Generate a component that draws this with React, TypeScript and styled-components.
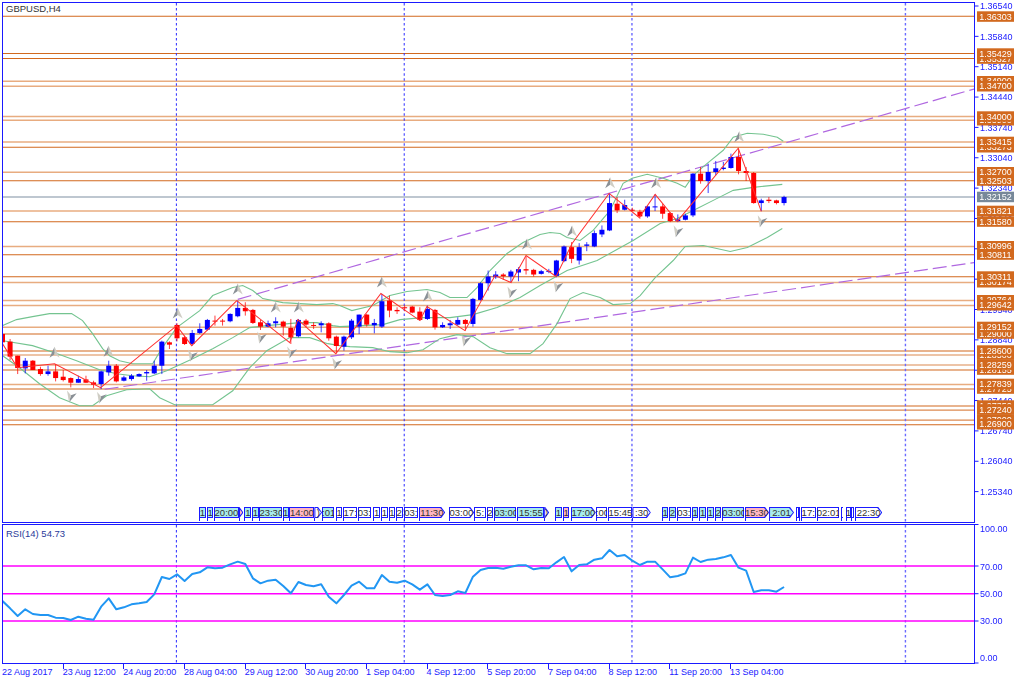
import styled, {createGlobalStyle} from "styled-components";

const BLUE = "#1a1aff";

const GlobalStyle = createGlobalStyle`
    html, body {
        margin: 0;
        background: #fff;
    }
`;

const Page = styled.div`
    width: 1024px;
    height: 683px;
    padding: 2px 0 0 2px;
    box-sizing: border-box;
    overflow: hidden;
    background: #fff;
    font-family: "Liberation Sans", Arial, sans-serif;
    font-size: 9px;
    color: ${BLUE};
`;

const Row = styled.div<{ $h: number; $gap?: number }>`
    display: flex;
    height: ${p => p.$h}px;
    margin-bottom: ${p => p.$gap || 0}px;
`;

const Pane = styled.div`
    position: relative;
    flex: none;
    width: 973px;
    box-sizing: border-box;
    border: 1px solid ${BLUE};
    border-left-width: 1.5px;
`;

const Plot = styled.svg`
    display: block;
    width: 100%;
    height: 100%;
    filter: blur(0.35px);
`;

const PaneTitle = styled.div<{ $dark?: boolean }>`
    position: absolute;
    left: 3px;
    top: ${p => p.$dark ? 0 : 3}px;
    color: ${p => p.$dark ? "#333" : "#2a3a9a"};
    font-size: 9.5px;
    line-height: 11px;
`;

const AxisPlot = styled.svg`
    display: block;
    flex: 1;
    min-width: 0;
    height: 100%;
    font-family: "Liberation Sans", Arial, sans-serif;
    font-size: 9px;
    filter: blur(0.15px);
`;

const TradeTags = styled.div`
    position: absolute;
    left: 0;
    top: 504px;
    display: flex;
    height: 11px;
`;

const Trade = styled.div<{ $w: number; $skip: number }>`
    position: relative;
    flex: none;
    width: ${p => p.$w}px;
    margin-left: ${p => p.$skip}px;

    &::after {
        content: "";
        position: absolute;
        left: 0;
        top: 100%;
        width: 1px;
        height: 3px;
        background: ${BLUE};
    }
`;

const pentagon = "polygon(0 0, calc(100% - 4px) 0, 100% 50%, calc(100% - 4px) 100%, 0 100%)";

const TradeFace = styled.div<{ $fill: string; $point?: boolean }>`
    position: relative;
    height: 100%;
    overflow: hidden;
    isolation: isolate;
    background: ${BLUE};
    clip-path: ${p => p.$point ? pentagon : "none"};
    color: #333;
    font-size: 9.5px;
    line-height: 11px;
    text-align: center;
    white-space: nowrap;

    &::before {
        content: "";
        position: absolute;
        inset: 1px;
        z-index: -1;
        background: ${p => p.$fill};
        clip-path: ${p => p.$point ? pentagon : "none"};
    }
`;

const TimeAxis = styled.div`
    display: flex;
`;

const TimeCell = styled.div`
    position: relative;
    flex: none;
    width: 60.67px;
    padding-top: 3px;
    line-height: 11px;
    white-space: nowrap;

    &:not(:first-child)::before {
        content: "";
        position: absolute;
        left: 0;
        top: 0;
        width: 1px;
        height: 5px;
        background: ${BLUE};
    }
`;

type Candle = [string, number, number, number, number];

// traced from crops, values are 1/3 px from the crop's top edge
const crop1: Candle[] = [
    ["r", 160, 185, 150, 195], ["r", 183, 228, 175, 238], ["r", 225, 262, 225, 280], ["b", 240, 263, 232, 278],
    ["r", 240, 268, 238, 268], ["r", 265, 280, 258, 285], ["b", 272, 280, 255, 285], ["r", 272, 292, 250, 302],
    ["r", 288, 298, 268, 302], ["r", 292, 306, 290, 320], ["b", 295, 306, 285, 306], ["r", 296, 306, 285, 306],
    ["r", 305, 312, 300, 322], ["b", 272, 310, 270, 325], ["b", 255, 275, 240, 285], ["r", 255, 302, 250, 305],
    ["b", 290, 300, 285, 302], ["b", 285, 295, 280, 300], ["b", 280, 287, 278, 288], ["b", 274, 278, 268, 300],
    ["b", 255, 278, 240, 280], ["b", 183, 255, 180, 280], ["r", 185, 192, 182, 205], ["r", 133, 173, 128, 182],
    ["r", 170, 190, 165, 193], ["b", 157, 190, 148, 195], ["b", 145, 157, 128, 160], ["b", 118, 147, 115, 150],
    ["r", 120, 122, 105, 135], ["r", 120, 123, 115, 135], ["b", 100, 122, 98, 125], ["b", 82, 107, 60, 110],
    ["r", 82, 92, 65, 105], ["r", 88, 127, 85, 130], ["r", 125, 138, 118, 148], ["b", 128, 138, 120, 140],
    ["b", 122, 128, 110, 140], ["r", 123, 138, 120, 165], ["r", 142, 170, 115, 190], ["b", 118, 167, 115, 170],
    ["r", 120, 132, 115, 140], ["r", 133, 136, 125, 145], ["b", 128, 134, 122, 155], ["r", 128, 173, 125, 180],
    ["r", 168, 196, 165, 218],
];

const crop2: Candle[] = [
    ["b", 288, 318, 285, 330], ["b", 240, 290, 235, 295], ["b", 222, 258, 222, 280], ["r", 222, 252, 220, 258],
    ["b", 247, 254, 235, 278], ["b", 182, 258, 160, 262], ["r", 180, 210, 165, 230], ["r", 208, 212, 200, 220],
    ["r", 200, 203, 195, 212], ["r", 198, 216, 196, 218], ["r", 213, 238, 200, 240], ["b", 205, 235, 195, 238],
    ["r", 208, 260, 205, 267], ["b", 253, 260, 245, 262], ["b", 248, 254, 238, 265], ["b", 238, 252, 230, 255],
    ["r", 238, 250, 235, 270], ["b", 175, 250, 172, 258], ["b", 128, 178, 125, 180], ["b", 108, 128, 90, 150],
    ["b", 102, 110, 92, 115], ["r", 102, 107, 98, 118], ["b", 93, 108, 88, 125], ["b", 86, 96, 80, 122],
    ["r", 86, 90, 48, 102], ["r", 88, 102, 85, 108], ["b", 92, 100, 88, 102], ["b", 91, 94, 85, 98],
    ["b", 60, 106, 58, 110], ["b", 18, 62, 15, 65], ["r", 20, 55, 5, 68], ["b", 20, 60, 8, 72],
];

const crop3: Candle[] = [
    ["b", 372, 376, 365, 392], ["b", 338, 378, 330, 380], ["b", 328, 342, 315, 350], ["b", 248, 330, 220, 332],
    ["r", 250, 270, 230, 278], ["b", 254, 268, 238, 270], ["r", 268, 271, 262, 273], ["r", 274, 288, 268, 295],
    ["b", 258, 288, 255, 292], ["b", 258, 260, 222, 272], ["r", 258, 280, 250, 295], ["r", 278, 302, 275, 305],
    ["b", 297, 302, 282, 305], ["b", 285, 298, 280, 300], ["b", 160, 285, 158, 290], ["r", 160, 182, 140, 190],
    ["b", 155, 182, 130, 218], ["b", 144, 155, 122, 165], ["b", 142, 146, 125, 150], ["b", 110, 143, 100, 145],
    ["r", 110, 152, 85, 162], ["r", 152, 158, 140, 182], ["r", 158, 248, 155, 250], ["b", 240, 248, 235, 272],
    ["r", 238, 242, 230, 248], ["r", 240, 248, 238, 252], ["b", 230, 248, 226, 255],
];

const shift = (rows: Candle[], top: number): Candle[] =>
    rows.map(([c, a, b, h, l]) => [c, top + a / 3, top + b / 3, top + h / 3, top + l / 3]);

const candles = [...shift(crop1, 280), ...shift(crop2, 240), ...shift(crop3, 120)];
const barX = (i: number) => 3 + 7.58 * i;

const levels: [number, string][] = [
    [16.3, "d"], [53.3, "d"], [58.3, "d"], [81, "l"], [86, "l"], [116.3, "l"], [120, "l"], [141.7, "l"], [147, "d"],
    [172, "l"], [180.3, "d"], [210.7, "l"], [221.3, "d"], [246, "l"], [254.3, "d"], [276.3, "d"], [282, "l"],
    [300, "l"], [305, "l"], [326.7, "l"], [333.3, "d"], [350.3, "d"], [354.3, "m"], [364.3, "m"], [369.3, "d"],
    [383.7, "l"], [388.3, "d"], [405.3, "d"], [409.3, "m"], [419.3, "m"], [424, "d"],
];

const zigzag = [
    [3, 343], [18, 367], [55, 363], [101, 387], [177, 325], [192, 345], [237, 300], [290, 342], [298, 319],
    [336, 353], [381, 293], [420, 320], [427, 306], [465, 330], [495, 275], [511, 282], [526, 255], [556, 276],
    [572, 243], [609, 193], [639, 217], [655, 194], [677, 221], [738, 148], [761, 211],
];

const bandUpper = [
    [3, 325], [17, 319], [33, 316], [50, 313], [72, 313], [83, 320], [93, 333], [103, 348], [110, 355], [120, 360],
    [133, 363], [153, 363], [162, 348], [177, 327], [200, 310], [213, 295], [233, 287], [243, 285], [253, 290],
    [263, 298], [283, 302], [317, 304], [333, 303], [340, 305], [352, 310], [373, 305], [390, 295], [407, 291],
    [427, 289], [440, 292], [450, 297], [467, 297], [477, 287], [490, 270], [507, 253], [523, 242], [540, 234],
    [550, 232], [560, 233], [567, 237], [580, 240], [593, 230], [610, 210], [623, 183], [632, 178], [647, 174],
    [663, 178], [677, 183], [685, 187], [693, 175], [707, 163], [723, 150], [733, 137], [747, 133], [763, 134],
    [777, 137], [783, 141],
];

const bandMiddle = [
    [3, 340], [33, 345], [55, 352], [77, 360], [100, 369], [117, 373], [133, 375], [150, 376], [167, 370], [193, 358],
    [213, 348], [233, 337], [250, 327], [267, 325], [300, 322], [317, 322], [333, 325], [340, 326], [383, 324],
    [400, 319], [423, 317], [450, 317], [473, 314], [497, 307], [520, 297], [540, 285], [567, 270], [597, 260],
    [633, 240], [660, 223], [677, 218], [693, 210], [717, 198], [733, 190], [753, 187], [782, 184],
];

const bandLower = [
    [3, 355], [20, 367], [40, 383], [60, 397], [80, 405], [93, 405], [107, 395], [127, 389], [150, 388], [160, 397],
    [175, 404], [213, 404], [233, 390], [250, 367], [267, 350], [290, 337], [310, 337], [328, 343], [340, 345],
    [350, 346], [373, 347], [390, 351], [407, 352], [423, 349], [440, 338], [457, 334], [473, 336], [490, 347],
    [507, 353], [530, 353], [543, 343], [557, 323], [570, 298], [583, 292], [600, 297], [613, 304], [630, 303],
    [640, 295], [655, 277], [673, 260], [685, 246], [703, 245], [730, 251], [747, 247], [767, 237], [782, 228],
];

const arrowsUp = [
    [55, 352], [109, 351], [178, 313], [238, 289], [276, 307], [299, 307], [382, 282], [428, 296], [527, 244],
    [572, 231], [610, 183], [656, 183], [739, 137],
];

const arrowsDown = [
    [71, 396], [101, 397], [192, 355], [261, 337], [291, 352], [336, 363], [465, 340], [511, 292], [557, 286],
    [677, 231], [761, 221],
];

const rsi = [
    258, 280, 303, 283, 297, 300, 300, 308, 309, 315, 305, 311, 314, 275, 250, 283, 277, 268, 265, 261, 238, 186,
    192, 178, 198, 177, 172, 157, 160, 158, 148, 140, 147, 190, 205, 197, 194, 213, 235, 201, 210, 214, 208, 245,
    265, 240, 212, 200, 220, 220, 180, 200, 203, 197, 208, 224, 208, 240, 243, 240, 229, 234, 185, 165, 159, 158,
    161, 155, 151, 151, 163, 159, 160, 142, 126, 169, 150, 148, 134, 130, 105, 124, 120, 137, 150, 140, 140, 163,
    187, 183, 175, 128, 141, 134, 132, 127, 120, 158, 167, 231, 226, 226, 230, 216,
];

const axisPrices = [
    "1.36540", "1.35840", "1.35140", "1.34440", "1.33740", "1.33040", "1.32340", "1.31640", "1.30940",
    "1.30240", "1.29540", "1.28840", "1.28140", "1.27440", "1.26740", "1.26040", "1.25340",
];

// order matters, later tags cover earlier ones
const priceTags: [string, number][] = [
    ["1.35327", 58.3], ["1.34900", 81], ["1.33900", 120], ["1.33273", 147], ["1.31580", 221.3], ["1.30174", 282],
    ["1.29764", 300], ["1.29000", 333.3], ["1.28500", 354.3], ["1.28155", 369.3], ["1.27725", 388.3],
    ["1.27350", 405.3], ["1.27000", 419.3],
    ["1.36303", 16.3], ["1.35429", 53.3], ["1.34700", 86], ["1.34000", 116.3], ["1.33415", 141.7], ["1.32700", 172],
    ["1.32503", 180.3], ["1.31821", 210.7], ["1.30996", 246], ["1.30811", 254.3], ["1.30311", 276.3],
    ["1.29642", 305], ["1.29152", 326.7], ["1.28600", 350.3], ["1.28259", 364.3], ["1.27839", 383.7],
    ["1.27240", 409.3], ["1.26900", 424],
];

const rsiScale: [string, number, number][] = [
    ["100.00", 524.5, 529],
    ["70.00", 566, 567],
    ["50.00", 593.7, 594],
    ["30.00", 621, 621],
    ["0.00", 663, 658],
];

const C = "#a8ecec";
const P = "#ffb6c1";
const W = "#ffffff";

const trades: [string, number, number, string, boolean?][] = [
    ["1", 199.3, 206.7, C], ["1", 207.3, 214, C], ["20:00", 214.7, 239.3, C], ["", 239.3, 244, P, true],
    ["1", 245, 251.7, C], ["1", 252.7, 259.3, C], ["23:30", 260, 282.7, C], ["1", 283.3, 289.3, C],
    ["14:00", 290, 315, P], [")", 315, 322.7, W, true], [":01", 322.7, 335, C], ["1", 336.7, 342.7, W],
    ["17:", 344, 357.7, W], ["03:", 358.3, 371.7, W], ["1", 374, 380.7, W], ["1", 381.7, 388.3, W],
    ["1", 389.3, 396, W], ["2", 396.7, 403.3, W], ["03:", 405, 418.3, W], ["11:30", 419.3, 446, P, true],
    ["03:00", 449.3, 475, W, true], ["5:", 475, 486.7, W], ["2", 487.3, 494, W], ["03:00", 495, 517.3, C],
    ["15:55", 518.3, 545, C], [")", 545, 550, W, true], ["1", 556, 562.7, C], ["1", 563.7, 570.3, P],
    ["17:00", 571.7, 596.7, C, true], [":00", 596.7, 608.3, W], ["15:45", 609.3, 633.3, W],
    [":30", 633.3, 651.7, W, true], ["1", 662.7, 669.3, C], ["2", 670, 676.7, C], ["03:", 677.7, 691.7, W],
    ["1", 692.7, 699.3, C], ["1", 700.3, 707, C], ["1", 708, 714.7, C], ["2", 715.7, 722.3, C],
    ["03:00", 723.3, 745, C], ["15:30", 745.7, 770, P, true], ["2:01", 770, 795, C, true], ["", 796.7, 799.5, W],
    ["", 800, 801.2, W], ["17:", 801.7, 816.7, W], ["02:01", 817.7, 840, W], ["", 841.7, 844, W],
    ["1", 846.7, 851.7, W], ["", 852.3, 855, W], ["22:30", 856, 883.3, W, true],
];

const times = [
    "22 Aug 2017", "23 Aug 12:00", "24 Aug 20:00", "28 Aug 04:00", "29 Aug 12:00", "30 Aug 20:00", "1 Sep 04:00",
    "4 Sep 12:00", "5 Sep 20:00", "7 Sep 04:00", "8 Sep 12:00", "11 Sep 20:00", "13 Sep 04:00",
];

const points = (list: number[][]) => list.map(p => p.join(",")).join(" ");

const levelStroke: Record<string, [string, number]> = {
    d: ["#d2691e", 1],
    m: ["#dc8a50", 1.2],
    l: ["#e8ac80", 1.5],
};

const Bands = () => (
    <g fill="none" stroke="#74c490" strokeWidth="1.1">
        <polyline points={points(bandUpper)}/>
        <polyline points={points(bandMiddle)}/>
        <polyline points={points(bandLower)}/>
    </g>
);

const Marker = ({x, y, down}: { x: number; y: number; down?: boolean }) => (
    <g transform={`translate(${x} ${y}) rotate(${down ? 195 : 0})`}>
        <path d="M0 -6 L-5 5 L0 1.5 Z" fill="#8a9096"/>
        <path d="M0 -6 L5 5 L0 1.5 Z" fill="#cfcdc4"/>
    </g>
);

const VerticalGrid = ({y1, y2}: { y1: number; y2: number }) => (
    <g stroke="#2a2aff" strokeWidth="1" strokeDasharray="2.5 2.5">
        <line x1="176.7" x2="176.7" y1={y1} y2={y2}/>
        <line x1="404.3" x2="404.3" y1={y1} y2={y2}/>
        <line x1="631.8" x2="631.8" y1={y1} y2={y2} stroke="#6a6aff" strokeWidth="1.4"/>
        <line x1="905" x2="905" y1={y1} y2={y2} stroke="#6a6aff" strokeWidth="1.4"/>
    </g>
);

const PriceChart = () => (
    <Plot viewBox="3.5 3 970 518" preserveAspectRatio="none">
        {levels.map(([y, tone]) => (
            <line key={y} x1="3" x2="974" y1={y} y2={y} stroke={levelStroke[tone][0]} strokeWidth={levelStroke[tone][1]}/>
        ))}
        <line x1="3" x2="974" y1="196.7" y2="196.7" stroke="#a9b4c0" strokeWidth="1.5"/>
        <VerticalGrid y1={3} y2={521}/>
        <g stroke="#b068e0" strokeWidth="1.2" strokeDasharray="14 5">
            <line x1="238" y1="298.8" x2="974" y2="88.7"/>
            <line x1="105" y1="388.5" x2="974" y2="262"/>
        </g>
        <Bands/>
        {arrowsUp.map(([x, y]) => <Marker key={x} x={x} y={y}/>)}
        {arrowsDown.map(([x, y]) => <Marker key={x} x={x} y={y} down/>)}
        {candles.map(([c, top, bottom, high, low], i) => {
            const color = c === "r" ? "#ff0000" : "#0000ff";
            const x = barX(i);
            return (
                <g key={i} fill={color}>
                    <rect x={x - 0.5} y={high} width="1" height={low - high} opacity="0.75"/>
                    <rect x={x - 2.5} y={top} width="5" height={Math.max(bottom - top, 1)}/>
                </g>
            );
        })}
        <polyline points={points(zigzag)} fill="none" stroke="#ff3030" strokeWidth="1"/>
    </Plot>
);

const RsiChart = () => (
    <Plot viewBox="3.5 525 970 138" preserveAspectRatio="none">
        <VerticalGrid y1={525} y2={663}/>
        <g stroke="#ff00ff" strokeWidth="1.6">
            <line x1="3" x2="974" y1="566" y2="566"/>
            <line x1="3" x2="974" y1="593.7" y2="593.7"/>
            <line x1="3" x2="974" y1="621" y2="621"/>
        </g>
        <polyline
            points={points(rsi.map((v, i) => [barX(i), 515 + v / 3]))}
            fill="none"
            stroke="#2196f3"
            strokeWidth="2"
            strokeLinejoin="round"
        />
    </Plot>
);

const PriceTag = ({price, y, fill}: { price: string; y: number; fill: string }) => (
    <g>
        <rect x="977" y={y - 5} width="37" height="10.5" fill={fill}/>
        <text x="995.5" y={y + 3.4} textAnchor="middle" fill="#fff">{price}</text>
    </g>
);

const PriceScale = () => (
    <AxisPlot viewBox="975 2 49 521" preserveAspectRatio="none">
        {axisPrices.map((price, i) => {
            const y = 6 + i * 30.35;
            return (
                <g key={price}>
                    <line x1="975" x2="978.5" y1={y} y2={y} stroke={BLUE}/>
                    <text x="980" y={y + 3.2} fill={BLUE}>{price}</text>
                </g>
            );
        })}
        {priceTags.map(([price, y]) => <PriceTag key={price} price={price} y={y} fill="#d2691e"/>)}
        <PriceTag price="1.32152" y={196.7} fill="#778899"/>
    </AxisPlot>
);

const RsiScale = () => (
    <AxisPlot viewBox="975 524 49 140" preserveAspectRatio="none">
        {rsiScale.map(([value, tick, y]) => (
            <g key={value}>
                <line x1="975" x2="978.5" y1={tick} y2={tick} stroke={BLUE}/>
                <text x="980" y={y + 3.2} fill={BLUE}>{value}</text>
            </g>
        ))}
    </AxisPlot>
);

export default function App() {
    let cursor = 0;
    return (
        <Page>
            <GlobalStyle/>
            <Row $h={521} $gap={1}>
                <Pane>
                    <PriceChart/>
                    <PaneTitle $dark>GBPUSD,H4</PaneTitle>
                    <TradeTags>
                        {trades.map(([text, x0, x1, fill, point], i) => {
                            const skip = x0 - 3.5 - cursor;
                            cursor = x1 - 3.5;
                            return (
                                <Trade key={i} $w={x1 - x0} $skip={skip}>
                                    <TradeFace $fill={fill} $point={point}>{text}</TradeFace>
                                </Trade>
                            );
                        })}
                    </TradeTags>
                </Pane>
                <PriceScale/>
            </Row>
            <Row $h={140}>
                <Pane>
                    <RsiChart/>
                    <PaneTitle>RSI(14) 54.73</PaneTitle>
                </Pane>
                <RsiScale/>
            </Row>
            <TimeAxis>
                {times.map(t => <TimeCell key={t}>{t}</TimeCell>)}
            </TimeAxis>
        </Page>
    );
}
